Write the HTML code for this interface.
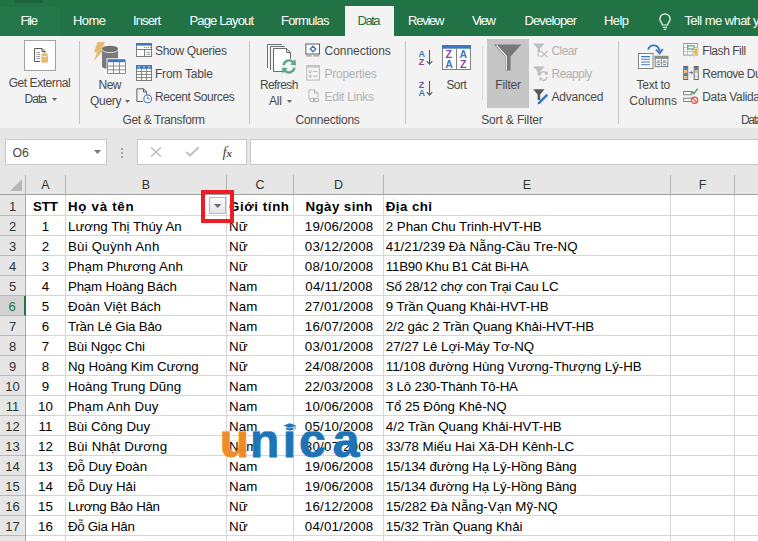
<!DOCTYPE html>
<html lang="vi"><head><meta charset="utf-8"><title>Excel - Filter</title>
<style>
html,body{margin:0;padding:0}
body{width:758px;height:541px;overflow:hidden;position:relative;background:#fff;font-family:"Liberation Sans",sans-serif;font-size:12px;color:#444}
.abs,.t{position:absolute}
.t{white-space:pre;line-height:16px;height:16px}
#tabs{position:absolute;left:0;top:0;width:758px;height:36px;background:#217346}
#ribbon{position:absolute;left:0;top:36px;width:758px;height:93px;background:#f3f3f3;border-bottom:1px solid #d3d3d3;box-sizing:border-box}
#fbar{position:absolute;left:0;top:128px;width:758px;height:67px;background:#e6e6e6}
.vsep{position:absolute;width:1px;background:#c3c3c3}
.box{position:absolute;background:#fff;border:1px solid #c8c8c8;box-sizing:border-box}
#grid{position:absolute;left:0;top:174px;width:758px;height:367px;overflow:hidden}
.ch{position:absolute;top:0;height:21px;line-height:22px;text-align:center;font-size:12.5px;color:#333}
.cs{position:absolute;top:1px;width:1px;height:20px;background:#b4b4b4}
.rh{position:absolute;left:0;width:25px;height:20px;line-height:22px;text-align:center;font-size:13px;color:#333;box-sizing:border-box;border-bottom:1px solid #b9b9b9}
.hl{position:absolute;height:1px;background:#d6d6d6;left:26px;width:732px}
.vl{position:absolute;width:1px;background:#d6d6d6;top:21px;height:346px}
.c{position:absolute;white-space:pre;color:#000;font-size:13.3px;line-height:20px;height:20px;letter-spacing:0.0px}
.b{font-weight:700}
svg{position:absolute;overflow:visible}
</style></head><body>

<div id="tabs"><div class="abs" style="left:15px;top:0;width:28px;height:3px;background:#1a6239"></div><div class="abs" style="left:0;top:7px;width:60px;height:29px;background:#24774a"></div>
<div class="abs" style="left:345px;top:6px;width:49px;height:30px;background:#f3f3f3"></div>
<svg style="left:0;top:0" width="758" height="36" viewBox="0 0 758 36"><path d="M662.3 25 C662.3 22.5 659.9 21.8 659.9 19 A5.1 5.1 0 0 1 670.1 19 C670.1 21.8 667.7 22.5 667.7 25 Z" fill="none" stroke="#fff" stroke-width="1.2"/><path d="M662.8 27.3 H667.2 M663.6 29.2 H666.4" stroke="#fff" stroke-width="1.1"/></svg></div>
<div id="ribbon"></div><div id="fbar"></div>
<div class="vsep" style="left:79px;top:41px;height:83px"></div>
<div class="vsep" style="left:249px;top:41px;height:83px"></div>
<div class="vsep" style="left:405px;top:41px;height:83px"></div>
<div class="vsep" style="left:618px;top:41px;height:83px"></div>
<div class="vsep" style="left:482px;top:46px;height:54px;background:#d4d4d4"></div>
<div class="abs" style="left:487px;top:39px;width:42px;height:69px;background:#c6c6c6"></div>
<svg style="left:0;top:0" width="758" height="130" viewBox="0 0 758 130" font-family="'Liberation Sans',sans-serif">
<rect x="24.5" y="40.5" width="31" height="30" fill="#fff" stroke="#a3a3a3"/>
<path d="M40 61.5 H34.5 V48.5 H42 L45 51.5 V53" fill="none" stroke="#5c5c5c"/><path d="M42 48.5 V51.5 H45" fill="none" stroke="#5c5c5c"/>
<path d="M36.3 52.5 H40 M36.3 54.5 H40 M36.3 56.5 H40 M36.3 58.5 H40" stroke="#9d9d9d"/>
<path d="M41.2 54.6 V61.4 A3.4 1.4 0 0 0 48 61.4 V54.6 Z" fill="#e8ba6c"/><ellipse cx="44.6" cy="54.6" rx="3.4" ry="1.4" fill="#e8ba6c"/><path d="M41.2 55.2 A3.4 1.4 0 0 0 48 55.2" fill="none" stroke="#fff" stroke-width="0.7"/>
<polygon points="97.6,42 105,42 101.3,49.6 104,49.6 93.8,61 97.2,52.2 94,52.2" fill="#e8ba6c"/>
<path d="M102 48.7 V66.2 A8 3 0 0 0 118 66.2 V48.7 Z" fill="#7a7a7a"/><ellipse cx="110" cy="48.7" rx="8" ry="3" fill="#727272"/><path d="M102 49.6 A8 3 0 0 0 118 49.6" fill="none" stroke="#f3f3f3" stroke-width="0.8"/>
<rect x="106.5" y="58.3" width="20" height="16" fill="#fff"/>
<rect x="107.5" y="59.2" width="18" height="3" fill="#3b78c0"/>
<path d="M107.5 62.2 V73.5 H125.5 V62.2 M113.5 62.2 V73.5 M119.5 62.2 V73.5 M107.5 66 H125.5 M107.5 69.8 H125.5" fill="none" stroke="#8a8a8a"/>
<rect x="136.5" y="43.5" width="15" height="13" fill="#fff" stroke="#7e7e7e"/>
<rect x="136" y="43" width="16" height="2.6" fill="#3b78c0"/>
<path d="M137 49.5 H151 M144.5 49.5 V56" stroke="#7e7e7e" fill="none"/><path d="M146.5 52.5 H150 M146.5 54.5 H150" stroke="#9a9a9a"/><path d="M144 47.5 h1 m1 0 h1 m1 0 h1 m1 0 h1" stroke="#8a8a8a"/>
<rect x="136.5" y="65.5" width="15" height="15" fill="#fff" stroke="#7e7e7e"/>
<rect x="136" y="65" width="16" height="3.8" fill="#3b78c0"/>
<path d="M137 71.5 H151 M137 74.5 H151 M137 77.5 H151 M141.5 69 V80 M146.5 69 V80" stroke="#8a8a8a" fill="none"/>
<path d="M138.3 66.8 h1.6 M143.2 66.8 h1.6 M148.1 66.8 h1.6" stroke="#fff" stroke-width="1"/>
<path d="M136.9 101.5 V88.8 H143.5 L146.6 92 V94 M143.5 88.8 V92 H146.6 M136.9 101.5 H143" fill="none" stroke="#5c5c5c"/>
<circle cx="147.7" cy="98.8" r="3.9" fill="#fff" stroke="#3b78c0" stroke-width="1.1"/><path d="M147.7 96.5 V99 H149.7" fill="none" stroke="#555" stroke-width="0.9"/>
<path d="M267.5 68 V44.5 H282" fill="none" stroke="#707070"/><path d="M270.5 70 V46.5 H285" fill="none" stroke="#707070"/>
<path d="M273.5 71.5 V48.5 H286.5 L290.5 52.5 V71.5 Z" fill="#fff" stroke="#686868"/><path d="M286.5 48.5 V52.5 H290.5" fill="none" stroke="#686868"/>
<circle cx="289" cy="66.4" r="8" fill="#f3f3f3"/>
<path d="M283.6 65.2 A5.6 5.6 0 0 1 293.6 62.6" fill="none" stroke="#5aa689" stroke-width="2.4"/><polygon points="295.6,59.2 295.9,65.4 290.2,64.6" fill="#5aa689"/>
<path d="M294.4 67.6 A5.6 5.6 0 0 1 284.4 70.2" fill="none" stroke="#5aa689" stroke-width="2.4"/><polygon points="282.4,73.6 282.1,67.4 287.8,68.2" fill="#5aa689"/>
<rect x="305.9" y="44" width="13.6" height="10" fill="#fff" stroke="#5c5c5c"/><path d="M306 55.9 H311.7 M313.3 55.9 H319.4" stroke="#7a7a7a" stroke-width="0.9"/>
<path d="M313 46.2 L315.8 49 L313 51.8 L310.2 49 Z" fill="#fff" stroke="#3b78c0" stroke-width="1.4"/>
<rect x="306.8" y="65.5" width="12.6" height="14.6" fill="#f6f4f6" stroke="#b9b9b9"/><rect x="306.3" y="65" width="13.6" height="2.6" fill="#c4c4c4"/>
<circle cx="310.2" cy="71.6" r="1.1" fill="none" stroke="#b5b5b5"/><circle cx="310.2" cy="76.2" r="1.1" fill="none" stroke="#b5b5b5"/><path d="M313 71.6 H317.5 M313 76.2 H317.5" stroke="#b5b5b5"/>
<path d="M309 99.5 V89.8 H314.5 L318 93.2 V97 M314.5 89.8 V93.2 H318" fill="#f6f4f6" stroke="#b9b9b9"/>
<rect x="310" y="98.3" width="5" height="3.4" rx="1.7" fill="none" stroke="#b3b3b3" stroke-width="1.1"/><rect x="313.6" y="98.3" width="5" height="3.4" rx="1.7" fill="none" stroke="#b3b3b3" stroke-width="1.1"/>
<text x="418.6" y="56.8" font-size="9" font-weight="700" fill="#3b78c0">A</text><text x="418.8" y="64.8" font-size="9" font-weight="700" fill="#8c41a8">Z</text>
<path d="M429.5 50 V64 M426.8 61.2 L429.5 64.2 L432.2 61.2" fill="none" stroke="#5c5c5c" stroke-width="1.1"/>
<text x="418.8" y="87.8" font-size="9" font-weight="700" fill="#8c41a8">Z</text><text x="418.6" y="95.6" font-size="9" font-weight="700" fill="#3b78c0">A</text>
<path d="M429.5 81 V95 M426.8 92.2 L429.5 95.2 L432.2 92.2" fill="none" stroke="#5c5c5c" stroke-width="1.1"/>
<rect x="442.5" y="45.5" width="28" height="24" fill="#fff" stroke="#808080"/>
<rect x="442" y="45" width="29" height="3.7" fill="#3b78c0"/><path d="M456.5 48.7 V69.5" stroke="#808080"/>
<text x="445.6" y="57.8" font-size="10.5" font-weight="700" fill="#8c41a8">Z</text><text x="445.2" y="67.8" font-size="10.5" font-weight="700" fill="#3b78c0">A</text>
<text x="459.6" y="57.8" font-size="10.5" font-weight="700" fill="#3b78c0">A</text><text x="460" y="67.8" font-size="10.5" font-weight="700" fill="#8c41a8">Z</text>
<polygon points="494,44.4 521.3,44.4 510.6,56.6 510.6,70.6 505,70.6 505,56.6" fill="#787878"/>
<path d="M496.6 45.3 L506.2 56.2 V70.2" fill="none" stroke="#fafafa" stroke-width="1.2"/>
<polygon points="533.2,43.4 544.6,43.4 540.2,48.6 540.2,52.6 537.6,52.6 537.6,48.6" fill="#bdbdbd"/>
<path d="M541 51 L547.6 57.4 M547.6 51 L541 57.4" stroke="#bdbdbd" stroke-width="1.2"/>
<path d="M538 53 V56 H540.5" stroke="#bdbdbd" fill="none"/>
<polygon points="533.2,66.4 544.6,66.4 540.2,71.6 540.2,75.6 537.6,75.6 537.6,71.6" fill="#bdbdbd"/>
<path d="M540.2 75.4 A3.3 3.3 0 0 1 546.2 73.2 M546.8 76.8 A3.3 3.3 0 0 1 540.8 79" fill="none" stroke="#bdbdbd" stroke-width="1.3"/><polygon points="547.6,71 547.8,75 544.2,74.2" fill="#bdbdbd"/><polygon points="539.6,81.2 539.4,77.2 543,78" fill="#bdbdbd"/>
<polygon points="533.2,89.2 544.6,89.2 540.2,94.6 540.2,100 537.6,100 537.6,94.6" fill="#5a5a5a"/>
<path d="M539.4 102.6 L546.6 95.4" stroke="#3b78c0" stroke-width="2.6" stroke-linecap="round"/><polygon points="537.6,104.4 538.2,101.6 540.4,103.8" fill="#3b78c0"/>
<rect x="638.5" y="53.5" width="14.5" height="15" fill="#fff" stroke="#808080"/>
<path d="M641 56.6 H650 M641 59.3 H650 M641 62 H650 M641 64.7 H650" stroke="#3b78c0" stroke-width="1.1"/>
<rect x="655.2" y="56.4" width="12.6" height="10.2" fill="#fff" stroke="#808080"/><rect x="654.7" y="55.9" width="13.6" height="3" fill="#8a8a8a"/><path d="M661.5 59 V66.5 M655.5 62.8 H667.5" stroke="#9a9a9a"/>
<path d="M657 61 h3 M663 61 h3 M657 64.7 h3 M663 64.7 h3" stroke="#3b78c0" stroke-width="1.1"/>
<path d="M648 49.6 C650 44 658.6 43.4 659.6 51.6" fill="none" stroke="#3b78c0" stroke-width="1.9"/><path d="M656 49.6 L659.6 53.4 L662.8 49.2" fill="none" stroke="#3b78c0" stroke-width="1.9"/>
<rect x="683.7" y="43.5" width="13.6" height="11.6" fill="#fff" stroke="#9a9a9a"/><path d="M684 47.5 H697 M684 51.5 H697 M687.5 44 V55 M692.5 47.5 V55" stroke="#c0c0c0"/>
<rect x="687.8" y="45.8" width="6.4" height="3.2" fill="#fff" stroke="#4a9a72" stroke-width="1.1"/>
<polygon points="694.4,48.6 699,48.6 697,52.2 699,52.2 693,58.4 694.8,53.8 692.6,53.8" fill="#eab54e" stroke="#f3f3f3" stroke-width="0.5"/>
<rect x="683.7" y="66.5" width="4" height="13" fill="#fff" stroke="#666"/><rect x="684.2" y="67" width="3" height="3" fill="#3b78c0"/><rect x="684.2" y="70.2" width="3" height="3" fill="#e8ba6c"/><rect x="684.2" y="73.2" width="3" height="3" fill="#3b78c0"/><rect x="684.2" y="76.2" width="3" height="2.8" fill="#e8ba6c"/>
<rect x="694.2" y="66.5" width="4" height="13" fill="#fff" stroke="#666"/><rect x="694.7" y="67" width="3" height="3" fill="#3b78c0"/><rect x="694.7" y="70.2" width="3" height="3" fill="#e8ba6c"/><path d="M694.7 76 H697.7" stroke="#999" stroke-width="0.6"/>
<path d="M689.2 72.6 H692.6 M691.2 71 L692.8 72.6 L691.2 74.2" fill="none" stroke="#3b78c0" stroke-width="1"/>
<rect x="683.7" y="91.5" width="8" height="3.2" fill="#fff" stroke="#808080"/><rect x="683.7" y="98.3" width="8" height="3.2" fill="#fff" stroke="#808080"/>
<path d="M691.6 91.4 L693.8 93.6 L697.8 88.6" fill="none" stroke="#4a9a72" stroke-width="1.5"/>
<circle cx="694.6" cy="100.2" r="3.1" fill="#fbe9e4" stroke="#d8553a" stroke-width="1.2"/><path d="M692.5 98.1 L696.7 102.3" stroke="#d8553a" stroke-width="1.2"/>
</svg>
<div class="box" style="left:5px;top:139px;width:102px;height:26px"></div>
<span class="t" style="left:20.5px;top:12.7px;font-size:13px;color:#fff;letter-spacing:-1.15px">File</span>
<span class="t" style="left:73.0px;top:12.7px;font-size:13px;color:#fff;letter-spacing:-0.56px">Home</span>
<span class="t" style="left:133.0px;top:12.7px;font-size:13px;color:#fff;letter-spacing:-0.90px">Insert</span>
<span class="t" style="left:189.5px;top:12.7px;font-size:13px;color:#fff;letter-spacing:-0.85px">Page Layout</span>
<span class="t" style="left:281.0px;top:12.7px;font-size:13px;color:#fff;letter-spacing:-0.81px">Formulas</span>
<span class="t" style="left:357.5px;top:12.7px;font-size:13px;color:#217346;letter-spacing:-1.49px">Data</span>
<span class="t" style="left:408.0px;top:12.7px;font-size:13px;color:#fff;letter-spacing:-1.23px">Review</span>
<span class="t" style="left:472.0px;top:12.7px;font-size:13px;color:#fff;letter-spacing:-1.32px">View</span>
<span class="t" style="left:524.4px;top:12.7px;font-size:13px;color:#fff;letter-spacing:-0.83px">Developer</span>
<span class="t" style="left:604.0px;top:12.7px;font-size:13px;color:#fff;letter-spacing:-0.58px">Help</span>
<span class="t" style="left:684.4px;top:12.7px;font-size:13px;color:#fff;letter-spacing:-0.56px">Tell me what you want to do</span>
<span class="t" style="left:8.7px;top:75.3px;font-size:12px;color:#4a4a4a;letter-spacing:-0.44px">Get External</span>
<span class="t" style="left:24.6px;top:90.8px;font-size:12px;color:#4a4a4a;letter-spacing:-0.99px">Data</span>
<span class="t" style="left:98.6px;top:76.8px;font-size:12px;color:#4a4a4a;letter-spacing:-0.56px">New</span>
<span class="t" style="left:90.0px;top:92.8px;font-size:12px;color:#4a4a4a;letter-spacing:-0.30px">Query</span>
<span class="t" style="left:260.0px;top:76.8px;font-size:12px;color:#4a4a4a;letter-spacing:-0.61px">Refresh</span>
<span class="t" style="left:269.0px;top:92.8px;font-size:12px;color:#4a4a4a;letter-spacing:-0.17px">All</span>
<span class="t" style="left:446.4px;top:76.8px;font-size:12px;color:#4a4a4a;letter-spacing:-0.54px">Sort</span>
<span class="t" style="left:495.3px;top:76.8px;font-size:12px;color:#4a4a4a;letter-spacing:-0.19px">Filter</span>
<span class="t" style="left:636.5px;top:76.8px;font-size:12px;color:#4a4a4a;letter-spacing:-0.26px">Text to</span>
<span class="t" style="left:629.3px;top:92.8px;font-size:12px;color:#4a4a4a;letter-spacing:0.06px">Columns</span>
<span class="t" style="left:155.0px;top:43.3px;font-size:12px;color:#4a4a4a;letter-spacing:-0.31px">Show Queries</span>
<span class="t" style="left:155.0px;top:66.3px;font-size:12px;color:#4a4a4a;letter-spacing:-0.22px">From Table</span>
<span class="t" style="left:155.0px;top:89.3px;font-size:12px;color:#4a4a4a;letter-spacing:-0.44px">Recent Sources</span>
<span class="t" style="left:324.6px;top:43.3px;font-size:12px;color:#4a4a4a;letter-spacing:-0.05px">Connections</span>
<span class="t" style="left:324.6px;top:66.3px;font-size:12px;color:#b1b1b1;letter-spacing:-0.27px">Properties</span>
<span class="t" style="left:324.6px;top:89.3px;font-size:12px;color:#b1b1b1;letter-spacing:-0.29px">Edit Links</span>
<span class="t" style="left:551.5px;top:43.3px;font-size:12px;color:#b1b1b1;letter-spacing:-0.55px">Clear</span>
<span class="t" style="left:551.5px;top:66.3px;font-size:12px;color:#b1b1b1;letter-spacing:-0.54px">Reapply</span>
<span class="t" style="left:551.5px;top:89.3px;font-size:12px;color:#4a4a4a;letter-spacing:-0.20px">Advanced</span>
<span class="t" style="left:702.3px;top:43.3px;font-size:12px;color:#4a4a4a;letter-spacing:-0.46px">Flash Fill</span>
<span class="t" style="left:702.3px;top:66.3px;font-size:12px;color:#4a4a4a;letter-spacing:-0.50px">Remove Duplicates</span>
<span class="t" style="left:702.3px;top:89.3px;font-size:12px;color:#4a4a4a;letter-spacing:-0.34px">Data Validation</span>
<span class="t" style="left:122.6px;top:112.1px;font-size:12px;color:#4a4a4a;letter-spacing:-0.40px">Get &amp; Transform</span>
<span class="t" style="left:295.5px;top:112.1px;font-size:12px;color:#4a4a4a;letter-spacing:-0.24px">Connections</span>
<span class="t" style="left:481.2px;top:112.1px;font-size:12px;color:#4a4a4a;letter-spacing:-0.14px">Sort &amp; Filter</span>
<span class="t" style="left:740.9px;top:112.1px;font-size:12px;color:#4a4a4a;letter-spacing:-1.29px">Data Tools</span>
<span class="t" style="left:12.5px;top:145.1px;font-size:12.3px;color:#444;letter-spacing:-0.11px">O6</span>
<svg style="left:51.5px;top:97.5px" width="5.0" height="3.0" viewBox="0 0 5.0 3.0"><polygon points="0,0 5.0,0 2.5,3.0" fill="#666"/></svg>
<svg style="left:125px;top:99.5px" width="5" height="3.0" viewBox="0 0 5 3.0"><polygon points="0,0 5,0 2.5,3.0" fill="#666"/></svg>
<svg style="left:286.5px;top:99.5px" width="5.0" height="3.0" viewBox="0 0 5.0 3.0"><polygon points="0,0 5.0,0 2.5,3.0" fill="#666"/></svg>
<svg style="left:93.5px;top:149.5px" width="7.0" height="4.0" viewBox="0 0 7.0 4.0"><polygon points="0,0 7.0,0 3.5,4.0" fill="#777"/></svg>
<div class="abs" style="left:121px;top:147.5px;width:2px;height:2px;background:#a6a6a6"></div>
<div class="abs" style="left:121px;top:151.5px;width:2px;height:2px;background:#a6a6a6"></div>
<div class="abs" style="left:121px;top:155.5px;width:2px;height:2px;background:#a6a6a6"></div>
<div class="box" style="left:137px;top:139px;width:110px;height:26px"></div>
<div class="box" style="left:250px;top:139px;width:520px;height:26px"></div>
<svg style="left:150px;top:147px" width="12" height="10" viewBox="0 0 12 10"><path d="M1 0.5 L11 9.5 M11 0.5 L1 9.5" stroke="#bebebe" stroke-width="1.5" fill="none"/></svg>
<svg style="left:185px;top:146px" width="15" height="11" viewBox="0 0 15 11"><path d="M1.2 6 L5 9.6 L13.6 1.2" stroke="#c4c4c4" stroke-width="2.1" fill="none"/></svg>
<span class="t" style="left:222.5px;top:143.5px;font-family:'Liberation Serif',serif;font-style:italic;font-size:15px;color:#4a4a4a;letter-spacing:-0.3px">f<b style="font-size:11px">x</b></span>
<div id="grid">
<div class="abs" style="left:0;top:0;width:758px;height:21px;background:#e6e6e6;border-bottom:1px solid #9e9e9e;box-sizing:border-box"></div>
<div class="abs" style="left:0;top:21px;width:25px;height:346px;background:#e6e6e6;border-right:1px solid #a9a9a9"></div>
<svg style="left:10px;top:5px" width="12" height="12" viewBox="0 0 12 12"><polygon points="12,0 12,12 0,12" fill="#b7b7b7"/></svg>
<div class="ch" style="left:26px;width:39px">A</div>
<div class="cs" style="left:25px"></div>
<div class="ch" style="left:66px;width:160px">B</div>
<div class="cs" style="left:65px"></div>
<div class="vl" style="left:65px"></div>
<div class="ch" style="left:227px;width:66px">C</div>
<div class="cs" style="left:226px"></div>
<div class="vl" style="left:226px"></div>
<div class="ch" style="left:294px;width:89px">D</div>
<div class="cs" style="left:293px"></div>
<div class="vl" style="left:293px"></div>
<div class="ch" style="left:384px;width:286px">E</div>
<div class="cs" style="left:383px"></div>
<div class="vl" style="left:383px"></div>
<div class="ch" style="left:671px;width:63px">F</div>
<div class="cs" style="left:670px"></div>
<div class="vl" style="left:670px"></div>
<div class="ch" style="left:735px;width:65px">G</div>
<div class="cs" style="left:734px"></div>
<div class="vl" style="left:734px"></div>
<div class="rh" style="top:22px;">1</div>
<div class="hl" style="top:41px"></div>
<div class="c b" style="left:26px;width:38.94px;text-align:center;top:23.2px;letter-spacing:-0.06px">STT</div>
<div class="c b" style="left:68px;top:23.2px;letter-spacing:0.71px">Họ và tên</div>
<div class="c b" style="left:229px;top:23.2px;letter-spacing:0.59px">Giới tính</div>
<div class="c b" style="left:294px;width:90.41px;text-align:center;top:23.2px;letter-spacing:0.41px">Ngày sinh</div>
<div class="c b" style="left:385.8px;top:23.2px;letter-spacing:0.43px">Địa chỉ</div>
<div class="rh" style="top:42px;">2</div>
<div class="hl" style="top:61px"></div>
<div class="c" style="left:26px;width:39.00px;text-align:center;top:43.2px;letter-spacing:0.00px">1</div>
<div class="c" style="left:68px;top:43.2px;letter-spacing:-0.02px">Lương Thị Thúy An</div>
<div class="c" style="left:229px;top:43.2px;letter-spacing:0.10px">Nữ</div>
<div class="c" style="left:294px;width:90.20px;text-align:center;top:43.2px;letter-spacing:0.20px">19/06/2008</div>
<div class="c" style="left:385.8px;top:43.2px;letter-spacing:-0.04px">2 Phan Chu Trinh-HVT-HB</div>
<div class="rh" style="top:62px;">3</div>
<div class="hl" style="top:81px"></div>
<div class="c" style="left:26px;width:39.00px;text-align:center;top:63.2px;letter-spacing:0.00px">2</div>
<div class="c" style="left:68px;top:63.2px;letter-spacing:0.22px">Bùi Quỳnh Anh</div>
<div class="c" style="left:229px;top:63.2px;letter-spacing:0.10px">Nữ</div>
<div class="c" style="left:294px;width:90.20px;text-align:center;top:63.2px;letter-spacing:0.20px">03/12/2008</div>
<div class="c" style="left:385.8px;top:63.2px;letter-spacing:0.01px">41/21/239 Đà Nẵng-Cầu Tre-NQ</div>
<div class="rh" style="top:82px;">4</div>
<div class="hl" style="top:101px"></div>
<div class="c" style="left:26px;width:39.00px;text-align:center;top:83.2px;letter-spacing:0.00px">3</div>
<div class="c" style="left:68px;top:83.2px;letter-spacing:0.08px">Phạm Phương Anh</div>
<div class="c" style="left:229px;top:83.2px;letter-spacing:0.10px">Nữ</div>
<div class="c" style="left:294px;width:90.20px;text-align:center;top:83.2px;letter-spacing:0.20px">08/10/2008</div>
<div class="c" style="left:385.8px;top:83.2px;letter-spacing:-0.23px">11B90 Khu B1 Cát Bi-HA</div>
<div class="rh" style="top:102px;">5</div>
<div class="hl" style="top:121px"></div>
<div class="c" style="left:26px;width:39.00px;text-align:center;top:103.2px;letter-spacing:0.00px">4</div>
<div class="c" style="left:68px;top:103.2px;letter-spacing:-0.20px">Phạm Hoàng Bách</div>
<div class="c" style="left:229px;top:103.2px;letter-spacing:0.10px">Nam</div>
<div class="c" style="left:294px;width:90.20px;text-align:center;top:103.2px;letter-spacing:0.20px">04/11/2008</div>
<div class="c" style="left:385.8px;top:103.2px;letter-spacing:-0.25px">Số 28/12 chợ con Trại Cau LC</div>
<div class="rh" style="top:122px;background:#d2d2d2;color:#217346;border-right:2px solid #217346;width:26px;">6</div>
<div class="hl" style="top:141px"></div>
<div class="c" style="left:26px;width:39.00px;text-align:center;top:123.2px;letter-spacing:0.00px">5</div>
<div class="c" style="left:68px;top:123.2px;letter-spacing:0.06px">Đoàn Việt Bách</div>
<div class="c" style="left:229px;top:123.2px;letter-spacing:0.10px">Nam</div>
<div class="c" style="left:294px;width:90.20px;text-align:center;top:123.2px;letter-spacing:0.20px">27/01/2008</div>
<div class="c" style="left:385.8px;top:123.2px;letter-spacing:-0.09px">9 Trần Quang Khải-HVT-HB</div>
<div class="rh" style="top:142px;">7</div>
<div class="hl" style="top:161px"></div>
<div class="c" style="left:26px;width:39.00px;text-align:center;top:143.2px;letter-spacing:0.00px">6</div>
<div class="c" style="left:68px;top:143.2px;letter-spacing:-0.22px">Trần Lê Gia Bảo</div>
<div class="c" style="left:229px;top:143.2px;letter-spacing:0.10px">Nam</div>
<div class="c" style="left:294px;width:90.20px;text-align:center;top:143.2px;letter-spacing:0.20px">16/07/2008</div>
<div class="c" style="left:385.8px;top:143.2px;letter-spacing:-0.12px">2/2 gác 2 Trần Quang Khải-HVT-HB</div>
<div class="rh" style="top:162px;">8</div>
<div class="hl" style="top:181px"></div>
<div class="c" style="left:26px;width:39.00px;text-align:center;top:163.2px;letter-spacing:0.00px">7</div>
<div class="c" style="left:68px;top:163.2px;letter-spacing:-0.06px">Bùi Ngọc Chi</div>
<div class="c" style="left:229px;top:163.2px;letter-spacing:0.10px">Nữ</div>
<div class="c" style="left:294px;width:90.20px;text-align:center;top:163.2px;letter-spacing:0.20px">03/01/2008</div>
<div class="c" style="left:385.8px;top:163.2px;letter-spacing:-0.02px">27/27 Lê Lợi-Máy Tơ-NQ</div>
<div class="rh" style="top:182px;">9</div>
<div class="hl" style="top:201px"></div>
<div class="c" style="left:26px;width:39.00px;text-align:center;top:183.2px;letter-spacing:0.00px">8</div>
<div class="c" style="left:68px;top:183.2px;letter-spacing:-0.09px">Ng Hoàng Kim Cương</div>
<div class="c" style="left:229px;top:183.2px;letter-spacing:0.10px">Nữ</div>
<div class="c" style="left:294px;width:90.20px;text-align:center;top:183.2px;letter-spacing:0.20px">24/08/2008</div>
<div class="c" style="left:385.8px;top:183.2px;letter-spacing:-0.02px">11/108 đường Hùng Vương-Thượng Lý-HB</div>
<div class="rh" style="top:202px;">10</div>
<div class="hl" style="top:221px"></div>
<div class="c" style="left:26px;width:39.00px;text-align:center;top:203.2px;letter-spacing:0.00px">9</div>
<div class="c" style="left:68px;top:203.2px;letter-spacing:0.05px">Hoàng Trung Dũng</div>
<div class="c" style="left:229px;top:203.2px;letter-spacing:0.10px">Nam</div>
<div class="c" style="left:294px;width:90.20px;text-align:center;top:203.2px;letter-spacing:0.20px">22/03/2008</div>
<div class="c" style="left:385.8px;top:203.2px;letter-spacing:-0.19px">3 Lô 230-Thành Tô-HA</div>
<div class="rh" style="top:222px;">11</div>
<div class="hl" style="top:241px"></div>
<div class="c" style="left:26px;width:39.00px;text-align:center;top:223.2px;letter-spacing:0.00px">10</div>
<div class="c" style="left:68px;top:223.2px;letter-spacing:0.16px">Phạm Anh Duy</div>
<div class="c" style="left:229px;top:223.2px;letter-spacing:0.10px">Nam</div>
<div class="c" style="left:294px;width:90.20px;text-align:center;top:223.2px;letter-spacing:0.20px">10/06/2008</div>
<div class="c" style="left:385.8px;top:223.2px;letter-spacing:-0.03px">Tổ 25 Đông Khê-NQ</div>
<div class="rh" style="top:242px;">12</div>
<div class="hl" style="top:261px"></div>
<div class="c" style="left:26px;width:39.00px;text-align:center;top:243.2px;letter-spacing:0.00px">11</div>
<div class="c" style="left:68px;top:243.2px;letter-spacing:-0.00px">Bùi Công Duy</div>
<div class="c" style="left:229px;top:243.2px;letter-spacing:0.10px">Nam</div>
<div class="c" style="left:294px;width:90.20px;text-align:center;top:243.2px;letter-spacing:0.20px">05/10/2008</div>
<div class="c" style="left:385.8px;top:243.2px;letter-spacing:-0.00px">4/2 Trần Quang Khải-HVT-HB</div>
<div class="rh" style="top:262px;">13</div>
<div class="hl" style="top:281px"></div>
<div class="c" style="left:26px;width:39.00px;text-align:center;top:263.2px;letter-spacing:0.00px">12</div>
<div class="c" style="left:68px;top:263.2px;letter-spacing:0.18px">Bùi Nhật Dương</div>
<div class="c" style="left:229px;top:263.2px;letter-spacing:0.10px">Nam</div>
<div class="c" style="left:294px;width:90.20px;text-align:center;top:263.2px;letter-spacing:0.20px">30/07/2008</div>
<div class="c" style="left:385.8px;top:263.2px;letter-spacing:-0.03px">33/78 Miếu Hai Xã-DH Kênh-LC</div>
<div class="rh" style="top:282px;">14</div>
<div class="hl" style="top:301px"></div>
<div class="c" style="left:26px;width:39.00px;text-align:center;top:283.2px;letter-spacing:0.00px">13</div>
<div class="c" style="left:68px;top:283.2px;letter-spacing:-0.08px">Đỗ Duy Đoàn</div>
<div class="c" style="left:229px;top:283.2px;letter-spacing:0.10px">Nam</div>
<div class="c" style="left:294px;width:90.20px;text-align:center;top:283.2px;letter-spacing:0.20px">19/06/2008</div>
<div class="c" style="left:385.8px;top:283.2px;letter-spacing:-0.10px">15/134 đường Hạ Lý-Hồng Bàng</div>
<div class="rh" style="top:302px;">15</div>
<div class="hl" style="top:321px"></div>
<div class="c" style="left:26px;width:39.00px;text-align:center;top:303.2px;letter-spacing:0.00px">14</div>
<div class="c" style="left:68px;top:303.2px;letter-spacing:-0.01px">Đỗ Duy Hải</div>
<div class="c" style="left:229px;top:303.2px;letter-spacing:0.10px">Nam</div>
<div class="c" style="left:294px;width:90.20px;text-align:center;top:303.2px;letter-spacing:0.20px">19/06/2008</div>
<div class="c" style="left:385.8px;top:303.2px;letter-spacing:-0.10px">15/134 đường Hạ Lý-Hồng Bàng</div>
<div class="rh" style="top:322px;">16</div>
<div class="hl" style="top:341px"></div>
<div class="c" style="left:26px;width:39.00px;text-align:center;top:323.2px;letter-spacing:0.00px">15</div>
<div class="c" style="left:68px;top:323.2px;letter-spacing:-0.27px">Lương Bảo Hân</div>
<div class="c" style="left:229px;top:323.2px;letter-spacing:0.10px">Nữ</div>
<div class="c" style="left:294px;width:90.20px;text-align:center;top:323.2px;letter-spacing:0.20px">16/12/2008</div>
<div class="c" style="left:385.8px;top:323.2px;letter-spacing:0.05px">15/282 Đà Nẵng-Vạn Mỹ-NQ</div>
<div class="rh" style="top:342px;">17</div>
<div class="hl" style="top:361px"></div>
<div class="c" style="left:26px;width:39.00px;text-align:center;top:343.2px;letter-spacing:0.00px">16</div>
<div class="c" style="left:68px;top:343.2px;letter-spacing:-0.29px">Đỗ Gia Hân</div>
<div class="c" style="left:229px;top:343.2px;letter-spacing:0.10px">Nữ</div>
<div class="c" style="left:294px;width:90.20px;text-align:center;top:343.2px;letter-spacing:0.20px">04/01/2008</div>
<div class="c" style="left:385.8px;top:343.2px;letter-spacing:-0.04px">15/32 Trần Quang Khải</div>
<div class="rh" style="top:362px;">18</div>
<div class="hl" style="top:381px"></div>
<div class="c" style="left:26px;width:39.00px;text-align:center;top:363.2px;letter-spacing:0.00px"></div>
<div class="c" style="left:68px;top:363.2px;letter-spacing:0.00px"></div>
<div class="c" style="left:229px;top:363.2px;letter-spacing:0.10px"></div>
<div class="c" style="left:294px;width:90.20px;text-align:center;top:363.2px;letter-spacing:0.20px"></div>
<div class="c" style="left:385.8px;top:363.2px;letter-spacing:0.00px"></div>
<div class="abs" style="left:209px;top:23px;width:17px;height:17px;box-sizing:border-box;border:1px solid #b3b7c0;background:linear-gradient(#fafbfc,#e2e5ea)"></div>
<svg style="left:214px;top:30.3px" width="7.4" height="4" viewBox="0 0 7.4 4"><polygon points="0,0 7.4,0 3.7,4" fill="#6a6a6a"/></svg>
<div class="abs" style="left:201px;top:16px;width:33px;height:33px;box-sizing:border-box;border:4.5px solid #ed1c24"></div>
<svg style="left:0;top:0" width="758" height="367" viewBox="0 174 758 367"><g opacity="0.98"><linearGradient id="lg" gradientUnits="userSpaceOnUse" x1="200" y1="0" x2="400" y2="0"><stop offset="0.245" stop-color="#f08a24"/><stop offset="0.245" stop-color="#1a72b6"/></linearGradient><clipPath id="lc"><rect x="215" y="431.4" width="160" height="40"/></clipPath><text clip-path="url(#lc)" font-family="'Liberation Sans',sans-serif" font-weight="700" font-size="48" y="457.4" x="219.8 250 282.8 299 332.8" fill="url(#lg)" stroke="url(#lg)" stroke-width="0.8">unica</text><polygon points="289.7,423.2 296,425.6 289.7,428 283.4,425.6" fill="#1a72b6"/><path d="M286.2 427.2 L289.7 428.6 L293.2 427.2 V429.6 Q289.7 431.4 286.2 429.6 Z" fill="#1a72b6"/><path d="M295 425.8 V429.4" stroke="#1a72b6" stroke-width="0.9"/></g></svg>
</div>
</body></html>
